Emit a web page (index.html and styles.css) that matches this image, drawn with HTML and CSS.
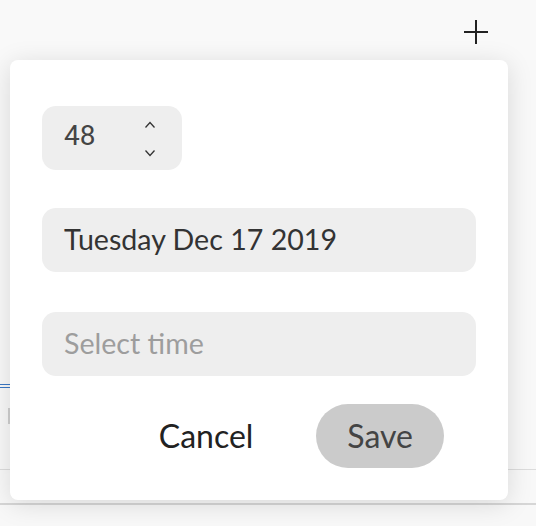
FILE: index.html
```html
<!DOCTYPE html>
<html lang="en">
<head>
<meta charset="utf-8">
<title>Schedule</title>
<link rel="stylesheet" href="styles.css">
</head>
<body>
<div class="app">
  <header class="topbar">
    <button class="add-btn" aria-label="Add">
      <svg width="26" height="26" viewBox="0 0 26 26"><path d="M13 1V25M1 13H25" stroke="#222" stroke-width="2" fill="none"/></svg>
    </button>
  </header>
  <main class="sheet">
    <div class="hidden-rows"></div>
    <div class="underline"></div>
    <div class="caret"></div>
    <div class="row-divider"></div>
    <div class="footer-line"></div>
  </main>

  <div class="popover">
    <div class="number-field">
      <span class="number-value">48</span>
      <div class="spinner">
        <svg width="12" height="8" viewBox="0 0 12 8"><path d="M1.5 6.5L6 1.5L10.5 6.5" stroke="#333" stroke-width="1.3" fill="none"/></svg>
        <svg width="12" height="8" viewBox="0 0 12 8"><path d="M1.5 1.5L6 6.5L10.5 1.5" stroke="#333" stroke-width="1.3" fill="none"/></svg>
      </div>
    </div>
    <div class="text-field date-field">Tuesday Dec 17 2019</div>
    <div class="text-field placeholder">Select time</div>
    <div class="actions">
      <button class="btn btn-cancel">Cancel</button>
      <button class="btn btn-save">Save</button>
    </div>
  </div>
</div>
</body>
</html>
```
FILE: styles.css
```css
html, body {
  margin: 0;
  padding: 0;
}
body {
  width: 536px;
  height: 526px;
  overflow: hidden;
  background: #f8f8f8;
  font-family: "Lato", "Noto Sans", sans-serif;
}
.app {
  position: relative;
  width: 536px;
  height: 526px;
}
.topbar {
  height: 60px;
  display: flex;
  justify-content: flex-end;
  align-items: center;
  padding-right: 47px;
  box-sizing: border-box;
  background: #f9f9f9;
}
.add-btn {
  border: none;
  background: none;
  padding: 0;
  width: 26px;
  height: 26px;
  display: flex;
  margin-top: 4px;
}
.sheet {
  display: flex;
  flex-direction: column;
}
.hidden-rows {
  height: 324px;
}
.underline {
  width: 300px;
  height: 2px;
  border-top: 1px solid #3b78c4;
  border-bottom: 1px solid #3b78c4;
}
.caret {
  margin-top: 20px;
  margin-left: 8px;
  width: 2px;
  height: 16px;
  background: #cfcfcf;
}
.row-divider {
  margin-top: 45px;
  height: 1px;
  background: #dcdcdc;
}
.footer-line {
  margin-top: 33px;
  height: 2px;
  background: #d6d6d6;
}
.popover {
  position: absolute;
  left: 10px;
  top: 60px;
  width: 498px;
  height: 440px;
  box-sizing: border-box;
  padding: 46px 32px 32px;
  background: #fff;
  border-radius: 8px;
  box-shadow: 0 4px 26px rgba(0, 0, 0, 0.13);
  display: flex;
  flex-direction: column;
}
.number-field {
  width: 140px;
  height: 64px;
  box-sizing: border-box;
  border-radius: 14px;
  background: #eeeeee;
  display: flex;
  align-items: center;
  justify-content: space-between;
  padding: 0 26px 0 22px;
}
.number-value {
  font-family: "Roboto", "Liberation Sans", sans-serif;
  font-size: 28px;
  color: #444;
  margin-top: -6px;
}
.spinner {
  display: flex;
  flex-direction: column;
  gap: 20px;
  margin-top: 2px;
}
.spinner svg {
  display: block;
}
.text-field {
  height: 64px;
  box-sizing: border-box;
  border-radius: 14px;
  background: #eeeeee;
  display: flex;
  align-items: center;
  padding: 0 22px 2px;
  font-size: 28.6px;
  color: #333;
}
.date-field {
  margin-top: 38px;
}
.placeholder {
  margin-top: 40px;
  color: #9d9d9d;
}
.actions {
  margin-top: 28px;
  padding-right: 32px;
  display: flex;
  justify-content: flex-end;
  gap: 32px;
}
.btn {
  height: 64px;
  border: none;
  border-radius: 32px;
  padding: 0 31px 2px;
  font-family: "Lato", "Noto Sans", sans-serif;
  font-size: 32px;
  cursor: pointer;
}
.btn-cancel {
  background: transparent;
  color: #222;
}
.btn-save {
  background: #cbcbcb;
  color: #444;
}
```
